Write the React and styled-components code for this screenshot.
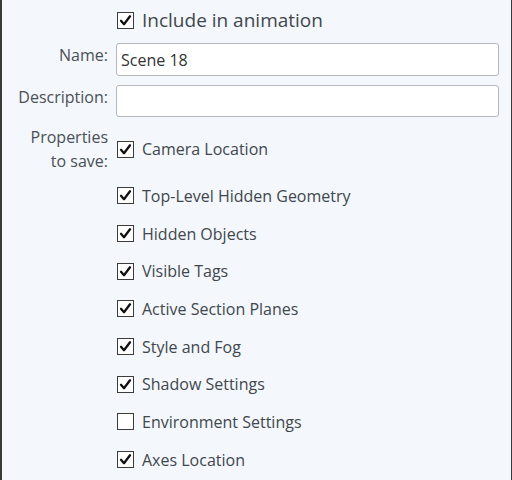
import React from "react";
import styled, { createGlobalStyle } from "styled-components";

const Global = createGlobalStyle`
  html, body { margin: 0; padding: 0; background: #f4f7fb; }
  body { font-family: "Open Sans", "Noto Sans", sans-serif; }
`;

const Panel = styled.div`
  box-sizing: border-box;
  width: 512px;
  height: 480px;
  background: #f4f7fb;
  border-left: 2px solid #3a3a3a;
  border-right: 1px solid #3a3a3a;
  padding: 8px 12px 0 0;
  display: flex;
  flex-direction: column;
  color: #333;
  font-size: 16px;
  overflow: hidden;
`;

const Row = styled.div`
  display: grid;
  grid-template-columns: 106px 1fr;
  column-gap: 8px;
  align-items: ${(p) => p.$align || "center"};
  margin-top: ${(p) => p.$top || 0}px;
`;

const Label = styled.div`
  text-align: right;
  line-height: 24px;
  color: #4a5057;
`;

const Input = styled.input`
  box-sizing: border-box;
  width: 100%;
  height: ${(p) => p.$h || 33}px;
  border: 1px solid #b4b8bd;
  border-radius: 3px;
  background: #fff;
  padding: 0 4px;
  font: inherit;
  font-size: 16px;
  color: #333;
  outline: none;
`;

const Item = styled.label`
  display: flex;
  align-items: center;
  gap: 8px;
  height: ${(p) => p.$h || 24}px;
  padding-left: 1px;
  line-height: 24px;
  color: #41474e;
  font-size: ${(p) => p.$size || 16}px;
`;

const Box = styled.span`
  box-sizing: border-box;
  width: 17px;
  height: 17px;
  border: 1.5px solid #3c3c3c;
  background: #fff;
  display: inline-flex;
  align-items: center;
  justify-content: center;
  flex: none;
`;

const List = styled.div`
  display: flex;
  flex-direction: column;
  margin-left: 114px;
  margin-top: 4px;
`;

function Check({ checked, label, h, size }) {
  return (
    <Item $h={h} $size={size}>
      <Box>
        {checked && (
          <svg width="13" height="13" viewBox="0 0 13 13">
            <path d="M2 6.8 L5 10.2 L11 2.3" fill="none" stroke="#111" strokeWidth="2.3" strokeLinecap="round" strokeLinejoin="round" />
          </svg>
        )}
      </Box>
      <span>{label}</span>
    </Item>
  );
}

const props = [
  ["Top-Level Hidden Geometry", true],
  ["Hidden Objects", true],
  ["Visible Tags", true],
  ["Active Section Planes", true],
  ["Style and Fog", true],
  ["Shadow Settings", true],
  ["Environment Settings", false],
  ["Axes Location", true],
];

export default function App() {
  return (
    <>
      <Global />
      <Panel>
        <Row>
          <span />
          <Check checked label="Include in animation" size={19} />
        </Row>
        <Row $top={11} $align="start">
          <Label>Name:</Label>
          <Input defaultValue="Scene 18" $h={33} />
        </Row>
        <Row $top={9} $align="start">
          <Label>Description:</Label>
          <Input defaultValue="" $h={32} />
        </Row>
        <Row $top={8}>
          <Label>
            Properties
            <br />
            to save:
          </Label>
          <Check checked label="Camera Location" />
        </Row>
        <List>
          {props.map(([l, c]) => (
            <Check key={l} checked={c} label={l} h={37.7} />
          ))}
        </List>
      </Panel>
    </>
  );
}
